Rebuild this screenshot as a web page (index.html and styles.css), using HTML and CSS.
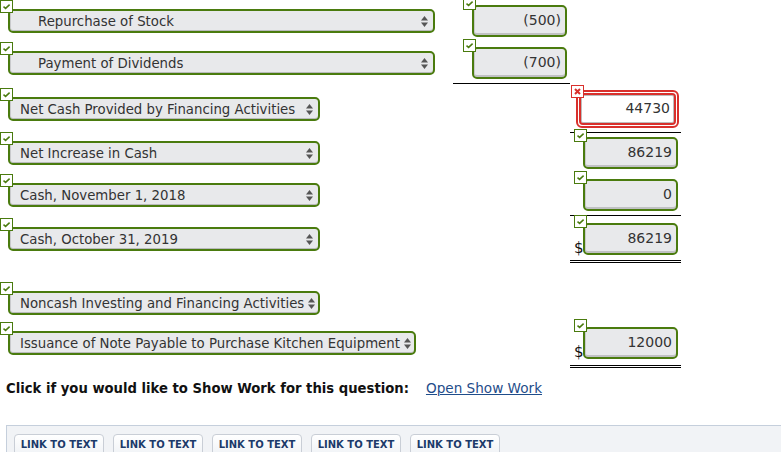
FILE: index.html
```html
<!DOCTYPE html>
<html>
<head>
<meta charset="utf-8">
<link rel="stylesheet" href="styles.css">
</head>
<body>
<div class="sheet">
  <div class="row r1">
    <div class="lab"><div class="sfld"><svg class="ok" viewBox="0 0 13 13"><rect x="0.5" y="0.5" width="12" height="12" fill="#fff" stroke="#4a7b0e"/><path d="M3.5 6.6 L5.6 8.4 L9.6 4.6" fill="none" stroke="#4a7b0e" stroke-width="1.5"/></svg><div class="sel w-wide ind"><span>Repurchase of Stock</span><svg class="arr" viewBox="0 0 7 11"><polygon points="0,4.5 3.5,0 7,4.5" fill="#555"/><polygon points="0,6.5 3.5,11 7,6.5" fill="#555"/></svg></div></div></div>
    <div class="c1"><div class="ifld"><svg class="ok" viewBox="0 0 13 13"><rect x="0.5" y="0.5" width="12" height="12" fill="#fff" stroke="#4a7b0e"/><path d="M3.5 6.6 L5.6 8.4 L9.6 4.6" fill="none" stroke="#4a7b0e" stroke-width="1.5"/></svg><div class="inp">(500)</div></div></div>
    <div class="c2"></div>
  </div>
  <div class="row r2">
    <div class="lab"><div class="sfld"><svg class="ok" viewBox="0 0 13 13"><rect x="0.5" y="0.5" width="12" height="12" fill="#fff" stroke="#4a7b0e"/><path d="M3.5 6.6 L5.6 8.4 L9.6 4.6" fill="none" stroke="#4a7b0e" stroke-width="1.5"/></svg><div class="sel w-wide ind"><span>Payment of Dividends</span><svg class="arr" viewBox="0 0 7 11"><polygon points="0,4.5 3.5,0 7,4.5" fill="#555"/><polygon points="0,6.5 3.5,11 7,6.5" fill="#555"/></svg></div></div></div>
    <div class="c1 line"><div class="ifld"><svg class="ok" viewBox="0 0 13 13"><rect x="0.5" y="0.5" width="12" height="12" fill="#fff" stroke="#4a7b0e"/><path d="M3.5 6.6 L5.6 8.4 L9.6 4.6" fill="none" stroke="#4a7b0e" stroke-width="1.5"/></svg><div class="inp">(700)</div></div></div>
    <div class="c2"></div>
  </div>
  <div class="row r3">
    <div class="lab"><div class="sfld"><svg class="ok" viewBox="0 0 13 13"><rect x="0.5" y="0.5" width="12" height="12" fill="#fff" stroke="#4a7b0e"/><path d="M3.5 6.6 L5.6 8.4 L9.6 4.6" fill="none" stroke="#4a7b0e" stroke-width="1.5"/></svg><div class="sel w-mid"><span>Net Cash Provided by Financing Activities</span><svg class="arr" viewBox="0 0 7 11"><polygon points="0,4.5 3.5,0 7,4.5" fill="#555"/><polygon points="0,6.5 3.5,11 7,6.5" fill="#555"/></svg></div></div></div>
    <div class="c1"></div>
    <div class="c2 line red-cell"><div class="xfld"><svg class="ok" viewBox="0 0 13 13"><rect x="0.5" y="0.5" width="12" height="12" fill="#fff" stroke="#d9302c"/><path d="M4 4 L9 9 M9 4 L4 9" fill="none" stroke="#d9302c" stroke-width="2"/></svg><div class="redframe"><div class="inp bad">44730</div></div></div></div>
  </div>
  <div class="row r4">
    <div class="lab"><div class="sfld"><svg class="ok" viewBox="0 0 13 13"><rect x="0.5" y="0.5" width="12" height="12" fill="#fff" stroke="#4a7b0e"/><path d="M3.5 6.6 L5.6 8.4 L9.6 4.6" fill="none" stroke="#4a7b0e" stroke-width="1.5"/></svg><div class="sel w-mid"><span>Net Increase in Cash</span><svg class="arr" viewBox="0 0 7 11"><polygon points="0,4.5 3.5,0 7,4.5" fill="#555"/><polygon points="0,6.5 3.5,11 7,6.5" fill="#555"/></svg></div></div></div>
    <div class="c1"></div>
    <div class="c2"><div class="ifld"><svg class="ok" viewBox="0 0 13 13"><rect x="0.5" y="0.5" width="12" height="12" fill="#fff" stroke="#4a7b0e"/><path d="M3.5 6.6 L5.6 8.4 L9.6 4.6" fill="none" stroke="#4a7b0e" stroke-width="1.5"/></svg><div class="inp">86219</div></div></div>
  </div>
  <div class="row r5">
    <div class="lab"><div class="sfld"><svg class="ok" viewBox="0 0 13 13"><rect x="0.5" y="0.5" width="12" height="12" fill="#fff" stroke="#4a7b0e"/><path d="M3.5 6.6 L5.6 8.4 L9.6 4.6" fill="none" stroke="#4a7b0e" stroke-width="1.5"/></svg><div class="sel w-mid"><span>Cash, November 1, 2018</span><svg class="arr" viewBox="0 0 7 11"><polygon points="0,4.5 3.5,0 7,4.5" fill="#555"/><polygon points="0,6.5 3.5,11 7,6.5" fill="#555"/></svg></div></div></div>
    <div class="c1"></div>
    <div class="c2 line"><div class="ifld"><svg class="ok" viewBox="0 0 13 13"><rect x="0.5" y="0.5" width="12" height="12" fill="#fff" stroke="#4a7b0e"/><path d="M3.5 6.6 L5.6 8.4 L9.6 4.6" fill="none" stroke="#4a7b0e" stroke-width="1.5"/></svg><div class="inp">0</div></div></div>
  </div>
  <div class="row r6">
    <div class="lab"><div class="sfld"><svg class="ok" viewBox="0 0 13 13"><rect x="0.5" y="0.5" width="12" height="12" fill="#fff" stroke="#4a7b0e"/><path d="M3.5 6.6 L5.6 8.4 L9.6 4.6" fill="none" stroke="#4a7b0e" stroke-width="1.5"/></svg><div class="sel w-mid"><span>Cash, October 31, 2019</span><svg class="arr" viewBox="0 0 7 11"><polygon points="0,4.5 3.5,0 7,4.5" fill="#555"/><polygon points="0,6.5 3.5,11 7,6.5" fill="#555"/></svg></div></div></div>
    <div class="c1"></div>
    <div class="c2 dline"><div class="ifld"><svg class="ok" viewBox="0 0 13 13"><rect x="0.5" y="0.5" width="12" height="12" fill="#fff" stroke="#4a7b0e"/><path d="M3.5 6.6 L5.6 8.4 L9.6 4.6" fill="none" stroke="#4a7b0e" stroke-width="1.5"/></svg><span class="dollar">$</span><div class="inp">86219</div></div></div>
  </div>
  <div class="row r7">
    <div class="lab"><div class="sfld"><svg class="ok" viewBox="0 0 13 13"><rect x="0.5" y="0.5" width="12" height="12" fill="#fff" stroke="#4a7b0e"/><path d="M3.5 6.6 L5.6 8.4 L9.6 4.6" fill="none" stroke="#4a7b0e" stroke-width="1.5"/></svg><div class="sel w-mid tight"><span>Noncash Investing and Financing Activities</span><svg class="arr" viewBox="0 0 7 11"><polygon points="0,4.5 3.5,0 7,4.5" fill="#555"/><polygon points="0,6.5 3.5,11 7,6.5" fill="#555"/></svg></div></div></div>
    <div class="c1"></div>
    <div class="c2"></div>
  </div>
  <div class="row r8">
    <div class="lab"><div class="sfld"><svg class="ok" viewBox="0 0 13 13"><rect x="0.5" y="0.5" width="12" height="12" fill="#fff" stroke="#4a7b0e"/><path d="M3.5 6.6 L5.6 8.4 L9.6 4.6" fill="none" stroke="#4a7b0e" stroke-width="1.5"/></svg><div class="sel w-long tight"><span>Issuance of Note Payable to Purchase Kitchen Equipment</span><svg class="arr" viewBox="0 0 7 11"><polygon points="0,4.5 3.5,0 7,4.5" fill="#555"/><polygon points="0,6.5 3.5,11 7,6.5" fill="#555"/></svg></div></div></div>
    <div class="c1"></div>
    <div class="c2 dline dline8"><div class="ifld"><svg class="ok" viewBox="0 0 13 13"><rect x="0.5" y="0.5" width="12" height="12" fill="#fff" stroke="#4a7b0e"/><path d="M3.5 6.6 L5.6 8.4 L9.6 4.6" fill="none" stroke="#4a7b0e" stroke-width="1.5"/></svg><span class="dollar">$</span><div class="inp">12000</div></div></div>
  </div>
</div>
<p class="showwork"><b>Click if you would like to Show Work for this question:</b><a class="open" href="#">Open Show Work</a></p>
<div class="panel">
  <span class="btn">LINK TO TEXT</span>
  <span class="btn">LINK TO TEXT</span>
  <span class="btn">LINK TO TEXT</span>
  <span class="btn">LINK TO TEXT</span>
  <span class="btn">LINK TO TEXT</span>
</div>
</body>
</html>
```
FILE: styles.css
```css
html, body {
  margin: 0;
  padding: 0;
}
body {
  width: 781px;
  height: 452px;
  overflow: hidden;
  background: #fff;
  font-family: "DejaVu Sans", Verdana, sans-serif;
  font-size: 13px;
  color: #333;
}
.row {
  display: grid;
  grid-template-columns: 453px 117px 111px;
  align-items: start;
}
.r1 { height: 42px; }
.r2 { height: 46px; }
.r3 { height: 44px; }
.r4 { height: 42px; }
.r5 { height: 44px; }
.r6 { height: 64px; }
.r7 { height: 40px; }
.r8 { height: 58px; }

.sfld {
  position: relative;
  padding: 9px 0 0 8px;
}
.ok {
  position: absolute;
  left: 0;
  top: 0;
  width: 13px;
  height: 13px;
  z-index: 2;
}
.sel {
  box-sizing: border-box;
  height: 24px;
  border: 2px solid #4a7b0e;
  border-radius: 5px;
  background: #e8e9eb;
  box-shadow: inset 1px 0 0 #c9cacc, inset 0 -1px 0 #b9babc;
  display: flex;
  align-items: center;
  justify-content: space-between;
  padding: 0 5px 0 10px;
  white-space: nowrap;
  overflow: hidden;
  color: #333;
  font-size: 13.3px;
}
.sel.ind { padding-left: 28px; }
.sel.tight { padding-right: 3px; }
.w-wide { width: 427px; }
.w-mid { width: 312px; }
.w-long { width: 408px; }
.arr {
  width: 7px;
  height: 11px;
  flex: none;
}

.c1 { padding-left: 10px; }
.c2 { padding-left: 4px; }
.c2.red-cell { padding-left: 1px; }
.ifld, .xfld {
  position: relative;
  margin-top: -3px;
}
.ifld { padding: 8px 0 0 9px; }
.xfld { padding: 5px 0 0 5px; }
.inp {
  box-sizing: border-box;
  width: 95px;
  height: 32px;
  border: 2px solid #4a7b0e;
  border-radius: 5px;
  background: #e8e9eb;
  box-shadow: inset 1px 0 0 #c9cacc, inset 0 -2px 0 #c0c1c3;
  text-align: right;
  padding-right: 4px;
  line-height: 27px;
  font-size: 14px;
  color: #333;
}
.redframe {
  box-sizing: border-box;
  width: 103px;
  height: 38px;
  border: 2px solid #d9302c;
  border-radius: 6px;
  padding: 1px;
  background: #fff;
}
.inp.bad {
  width: 97px;
  height: 32px;
  border-color: #d9302c;
  border-radius: 4px;
  background: #fff;
  box-shadow: inset 0 0 0 1px #bdbdbd;
}
.line {
  border-bottom: 1px solid #000;
  padding-bottom: 4px;
}
.dline {
  border-bottom: 3px double #000;
  padding-bottom: 5px;
}
.dline8 { padding-bottom: 6px; }
.dollar {
  position: absolute;
  left: 0;
  bottom: -1px;
  font-size: 15px;
  line-height: 15px;
  color: #111;
}

.showwork {
  margin: 0;
  padding-left: 6px;
  line-height: 16px;
  color: #111;
  font-size: 13.2px;
}
.showwork b { font-weight: bold; }
.open {
  margin-left: 17px;
  color: #1f4d8a;
  text-decoration: underline;
  font-size: 13.6px;
}
.panel {
  margin: 28px 0 0 6px;
  border-top: 1px solid #c5cfdc;
  border-left: 1px solid #c5cfdc;
  background: #f1f3f6;
  padding: 8px 0 10px 7px;
  display: flex;
  gap: 9px;
}
.btn {
  box-sizing: border-box;
  width: 90px;
  height: 24px;
  border: 1px solid #c9ced6;
  border-radius: 4px;
  background: linear-gradient(#ffffff, #eef1f5);
  color: #1c3a6a;
  font-weight: bold;
  font-size: 10px;
  line-height: 20px;
  text-align: center;
  white-space: nowrap;
}
```
